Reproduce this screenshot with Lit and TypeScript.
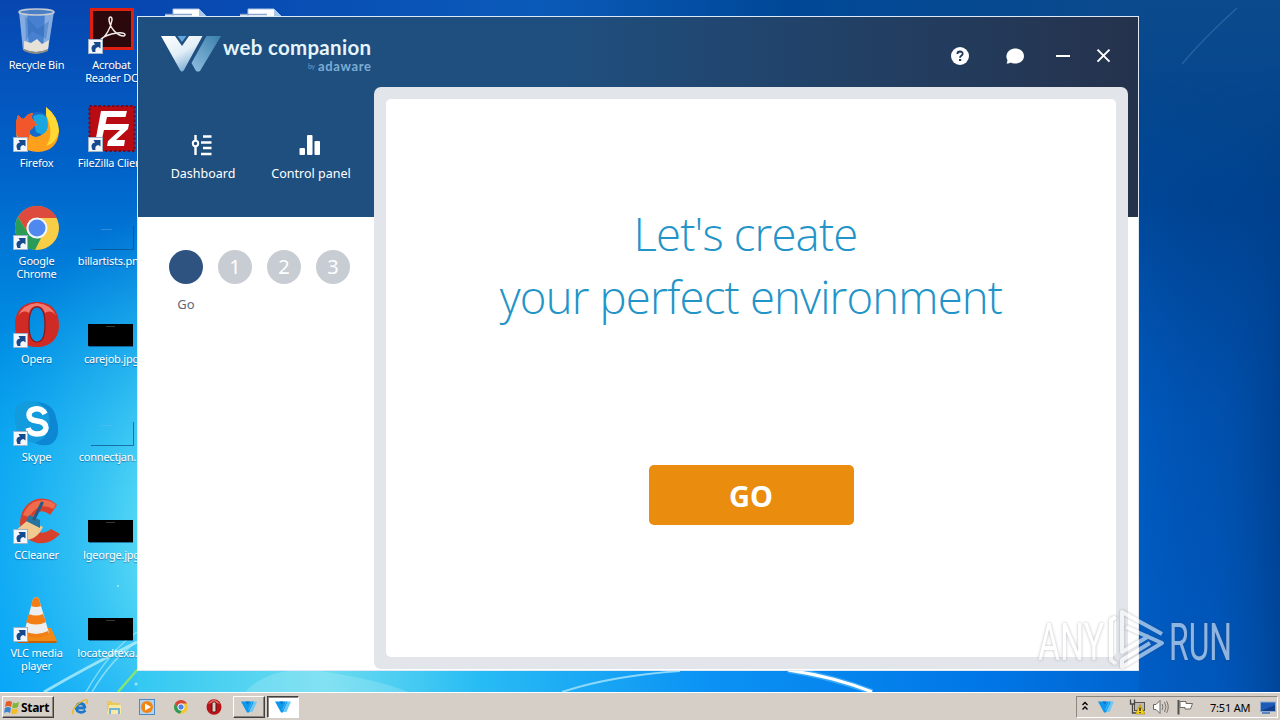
import { LitElement, html, css, svg, nothing, TemplateResult } from 'lit';
import { customElement, property } from 'lit/decorators.js';
import { classMap } from 'lit/directives/class-map.js';

interface Shortcut {
  icon: string;
  label: string;
  link?: boolean;
}

const COLUMNS: Shortcut[][] = [
  [
    { icon: 'bin', label: 'Recycle Bin' },
    { icon: 'firefox', label: 'Firefox', link: true },
    { icon: 'chrome', label: 'Google Chrome', link: true },
    { icon: 'opera', label: 'Opera', link: true },
    { icon: 'skype', label: 'Skype', link: true },
    { icon: 'ccleaner', label: 'CCleaner', link: true },
    { icon: 'vlc', label: 'VLC media player', link: true }
  ],
  [
    { icon: 'acrobat', label: 'Acrobat Reader DC', link: true },
    { icon: 'filezilla', label: 'FileZilla Client', link: true },
    { icon: 'clear', label: 'billartists.png' },
    { icon: 'black', label: 'carejob.jpg' },
    { icon: 'clear', label: 'connectjan....' },
    { icon: 'black', label: 'lgeorge.jpg' },
    { icon: 'black', label: 'locatedtexa....' }
  ],
  [{ icon: 'doc', label: '' }],
  [{ icon: 'doc', label: '' }]
];

// All artwork is drawn on a 48x48 grid
const ART: Record<string, TemplateResult> = {
  bin: svg`
    <path d="M7 4 L11 43 Q24 50 36 43 L42 4Z" fill="#5d93d8" opacity=".75"/>
    <path d="M7 4 L11 43 L17 45 L15 5Z M33 5 L31 45 L36 43 L42 4Z" fill="#b7cfee" opacity=".55"/>
    <path d="M13 9 L26 22 L37 14 L34 32 L20 24 L14 34Z" fill="#2e68b8" opacity=".4"/>
    <path d="M12 34 L19 36 L25 32 L30 37 L37 33 L36 42 Q24 48 12 42Z" fill="#e6e2d8"/>
    <path d="M12 42 Q24 48 36 42 L36 44 Q24 50 12 44Z" fill="#8e8b82"/>
    <ellipse cx="24.500" cy="5" rx="17.500" ry="3" fill="#4c7fc4" stroke="#c3cbd4" stroke-width="1.600"/>`,
  firefox: svg`
    <circle cx="25" cy="25" r="18" fill="#1668c9"/>
    <path d="M21 11 Q31 6 37 15 Q40 24 33 31 L24 27Z" fill="#19a5df"/>
    <path d="M4 17 L6 10 Q8 13 12 14 Q16 8 21 8 Q18 14 23 17 L25 20 Q21 21 20 24 Q16 25 18 29 Q23 35 31 29 Q39 25 34 10 L34 2 Q46 11 47 26 Q46 46 26 47 Q5 46 4 27Z" fill="#ffa01c"/>
    <path d="M4 17 L6 10 Q8 13 12 14 Q16 8 21 8 Q18 14 23 17 L25 20 Q21 21 20 24 Q16 25 18 29 L15 40 Q5 34 4 27Z" fill="#f2572b"/>
    <path d="M34 2 Q46 11 47 26 Q44 39 34 41 Q43 29 34 10Z" fill="#ffd934"/>`,
  chrome: svg`
    <circle cx="25" cy="25" r="22" fill="#f9ce47"/>
    <path d="M6 14 A22 22 0 0 1 45 15 H25 A10 10 0 0 0 16 30Z" fill="#dc4b3e"/>
    <path d="M6 14 L16 30 Q20 36 29 35 L23 47 A22 22 0 0 1 6 14Z" fill="#2b9c57"/>
    <circle cx="25" cy="25" r="10.500" fill="#f2f6fa"/>
    <circle cx="25" cy="25" r="8.500" fill="#4f88ee"/>`,
  opera: svg`
    <path fill-rule="evenodd" d="M25 1 C39 1 47 10 47 24 C47 38 38 46 25 46 C11 46 3 38 3 24 C3 10 11 1 25 1Z M25 6 C19 6 17 14 17 24 C17 34 19 41 25 41 C31 41 33 34 33 24 C33 14 31 6 25 6Z" fill="#cf2a24"/>
    <path d="M6 15 Q11 3 25 2 Q39 3 44 15 Q39 8 33 12 Q31 5 25 5 Q19 5 17 12 Q11 8 6 15Z" fill="#f07a70"/>
    <path fill="none" d="M25 6 C19 6 17 14 17 24 C17 34 19 41 25 41 C31 41 33 34 33 24 C33 14 31 6 25 6Z" stroke="#8c1519" stroke-width="1.200"/>`,
  skype: svg`
    <path d="M4 9 Q9 0 20 2 Q42 3 44 19 Q50 38 39 45 Q31 48 22 44 Q6 42 4 27 Q1 16 4 9Z" fill="#129bdd"/>
    <path d="M25 3 Q42 5 44 19 Q50 38 39 45 Q31 48 23 44 Q44 36 35 10Z" fill="#0a74cc" opacity=".55"/>
    <path d="M33 15 Q30 9 23 10 Q17 11 17 16 Q17 21 25 22 Q34 23 34 29 Q33 35 25 35 Q18 35 16 29" fill="none" stroke="#fff" stroke-width="5.500"/>`,
  ccleaner: svg`
    <path d="M45 8 L38 18 Q30 11 23 17 Q16 24 23 33 Q30 39 39 32 L48 37 Q38 48 25 46 Q9 42 8 26 Q9 7 25 2 Q37 0 45 8Z" fill="#d9402c"/>
    <path d="M11 18 Q17 3 31 3 Q39 3 44 8 L41 12 Q27 4 17 20Z" fill="#ee6b4b"/>
    <path d="M2 35 L16 23 L31 30 Q25 43 12 43 L8 37Z" fill="#f1ca91"/>
    <path d="M14 24 L17 18 L28 23 L28 31Z" fill="#28749e"/>
    <path d="M22 22 L30 6" stroke="#235a86" stroke-width="3" stroke-linecap="round"/>`,
  vlc: svg`
    <path d="M10 33 L39 33 L45 46 H5Z" fill="#f28a17"/>
    <path d="M5 46 L6 48 H44 L45 46Z" fill="#c76105"/>
    <path d="M21 4 Q25 0 27 4 L37 38 Q24 46 12 38Z" fill="#eee"/>
    <path d="M21 4 Q25 0 27 4 L29 11 Q24 13 19 11Z M17 19 Q24 22 31 19 L34 27 Q24 32 14 27Z M12 36 Q24 42 36 36 L37 39 Q24 46 11 39Z" fill="#f37e13"/>`,
  acrobat: svg`
    <rect x="3" y="1" width="44" height="42" fill="#de1f12"/>
    <rect x="6" y="4" width="38" height="36" fill="#2b080b"/>
    <path d="M13 33 C19 30 24 20 25 13 C25 9 22 9 22 13 C23 21 30 29 37 29 C40 27 36 25 30 26 C22 27 16 30 13 33Z" fill="none" stroke="#f1eaea" stroke-width="1.500"/>`,
  filezilla: svg`
    <rect x="2.500" y="1" width="45" height="45" fill="#b90b12" stroke="#720b20" stroke-width="2" stroke-dasharray="2.500 2"/>
    <path d="M14 6 H40 L38.500 12 H20 L18.500 19 H30 L29 25 H17 L14 38 H8Z" fill="#fff"/>
    <path d="M27 19 H42 L41 24 L29 35 H38 L37 41 H20 L21 36 L33 25 H26Z" fill="#fff"/>`,
  clear: svg`
    <path d="M4 46.500 H46.500 V23" fill="none" stroke="#064f86" opacity=".7"/>
    <path d="M14 26.500 H25" stroke="#7fb9ec" stroke-width=".8" opacity=".45"/>`,
  black: svg`
    <rect x="1" y="23" width="45" height="22" fill="#000"/>
    <path d="M2 45.500 H46" stroke="#0a3c66" opacity=".6"/>
    <path d="M19 25.500 H28" stroke="#444" stroke-width=".8"/>`,
  doc: svg`
    <path d="M3 8 H36 L46 16 V48 H3Z" fill="#f6f9fd"/>
    <path d="M11 2 H37 L46 11 V40 H11Z" fill="#fff" stroke="#a9c1e4"/>
    <path d="M37 2 L46 11 H37Z" fill="#a8c8ea"/>
    <path d="M3 7.500 H30" stroke="#8ba5cf" stroke-width="1.500"/>`
};

@customElement('desktop-shortcut')
export class DesktopShortcut extends LitElement {
  @property() icon = '';
  @property() label = '';
  @property({ type: Boolean }) link = false;

  static styles = css`
    :host {
      display: flex;
      flex-direction: column;
      align-items: center;
      box-sizing: border-box;
      width: 75px;
      height: 98px;
      padding-top: 7px;
    }

    svg {
      flex: none;
      width: 48px;
      height: 48px;
      overflow: visible;
    }

    .label {
      width: max-content;
      max-width: 70px;
      margin-top: 3px;
      padding-left: 2px;
      color: #fff;
      font: 11px/13px 'Noto Sans', 'Liberation Sans', sans-serif;
      letter-spacing: -0.22px;
      text-align: center;
      text-shadow: 0 1px 1px rgba(0, 20, 70, 0.4);
    }
  `;

  render() {
    return html`
      <svg viewBox="0 0 48 48">
        ${ART[this.icon]}
        ${this.link
          ? svg`
            <rect x="1.500" y="32.500" width="14" height="14" fill="#f3f6fa" stroke="#9fb3c8"/>
            <path d="M5.500 45 Q2.500 38.500 8 37.500 L6.500 35 H13.500 V41.500 L11.500 40 Q7.500 40.500 8.500 45Z" fill="#174a8c"/>`
          : nothing}
      </svg>
      <div class="label">${this.label}</div>
    `;
  }
}

@customElement('companion-window')
export class CompanionWindow extends LitElement {
  static styles = css`
    :host {
      display: block;
      box-sizing: border-box;
      border: 1px solid #dfe9f5;
      background: linear-gradient(90deg, #1f4f7f 0%, #1f4f7f 42%, #25324c 100%) 0 0 / 100% 200px no-repeat #fff;
      font-family: 'Noto Sans', 'Open Sans', sans-serif;
    }

    .titlebar {
      display: flex;
      height: 70px;
    }

    .logo {
      width: 240px;
      height: 70px;
    }

    .controls {
      display: flex;
      align-items: center;
      gap: 32px;
      height: 78px;
      margin-left: auto;
      padding-right: 26px;
    }

    .controls svg {
      display: block;
    }

    .help {
      margin-right: 5px;
    }

    .minimize {
      margin-right: -6px;
    }

    .body {
      display: flex;
    }

    .sidebar {
      width: 236px;
    }

    .tabs {
      display: flex;
      box-sizing: border-box;
      height: 130px;
      padding: 47px 0 0 11px;
    }

    .tab {
      display: flex;
      flex-direction: column;
      align-items: center;
      width: 108px;
      color: #fff;
      font-size: 12.5px;
      line-height: 18px;
      white-space: nowrap;
    }

    .tab svg {
      width: 24px;
      height: 22px;
      margin-bottom: 9px;
    }

    .steps {
      display: flex;
      gap: 15px;
      padding: 33px 0 0 31px;
    }

    .step {
      display: flex;
      flex-direction: column;
      align-items: center;
      gap: 11px;
      width: 34px;
      color: #5b6a7c;
      font-size: 13px;
      line-height: 18px;
    }

    .dot {
      width: 34px;
      border-radius: 50%;
      background: #c8ccd3;
      color: #fff;
      font-size: 20px;
      line-height: 34px;
      text-align: center;
    }

    .dot.active {
      height: 34px;
      background: #2e5380;
    }

    .panel {
      box-sizing: border-box;
      width: 754px;
      height: 582px;
      padding: 12px;
      border-radius: 7px;
      background: #e2e5ea;
    }

    .page {
      display: flex;
      flex-direction: column;
      align-items: center;
      box-sizing: border-box;
      height: 100%;
      padding-top: 103px;
      border-radius: 5px;
      background: #fff;
    }

    .headline {
      margin: 0;
      color: #2294c8;
      font: 300 45.500px/63px 'Open Sans', 'Noto Sans', sans-serif;
      letter-spacing: -0.84px;
      text-align: center;
      white-space: pre;
    }

    .go {
      width: 205px;
      height: 60px;
      margin-top: 137px;
      padding: 2px 0 0;
      border: 0;
      border-radius: 5px;
      background: #ea8d0e;
      color: #fff;
      font: 700 29px/58px 'Noto Sans', sans-serif;
    }
  `;

  private renderLogo() {
    return html`
      <svg class="logo" viewBox="138 17 240 70">
        <defs>
          <linearGradient id="front" x1="0" y1="0" x2=".6" y2="1">
            <stop offset="0" stop-color="#fff" />
            <stop offset=".55" stop-color="#e3eef7" />
            <stop offset="1" stop-color="#78acd6" />
          </linearGradient>
          <linearGradient id="back" x1="1" y1="0" x2=".2" y2="1">
            <stop offset="0" stop-color="#3a7fac" />
            <stop offset="1" stop-color="#89b9dc" />
          </linearGradient>
        </defs>
        <path d="M206.500 36 H221 L200 71 Q198 72 196 71 L191.500 63Z" fill="url(#back)" />
        <path d="M161 36 H175 L182 46 L189 36 H202.500 L184 70 Q182 73 180 70Z" fill="url(#front)" />
        <path d="M177.500 36 H186.500 L182 42Z" fill="#62a6dd" />
        <text x="223" y="55" textLength="148" font-family="Lato" font-weight="700" font-size="20.500" fill="#e6f5fc">web companion</text>
        <text x="308" y="69" textLength="7" font-family="Lato" font-size="7" fill="#6b9bc6">by</text>
        <text x="318" y="70.500" textLength="53" font-family="Lato" font-weight="700" font-size="13" fill="#7cadd3">adaware</text>
      </svg>
    `;
  }

  private renderControls() {
    return html`
      <div class="controls">
        <svg class="help" width="18" height="18">
          <circle cx="9" cy="9" r="9" fill="#fff" />
          <path d="M6.400 7 Q6.500 4.500 9 4.500 Q11.700 4.600 11.600 6.900 Q11.500 8.200 10 9 Q9.100 9.600 9.100 10.800" fill="none" stroke="#22395b" stroke-width="1.900" />
          <rect x="8" y="12" width="2.200" height="2" fill="#22395b" />
        </svg>
        <svg width="18" height="18">
          <path d="M9.500 1.500 C14 1.500 18 4.500 18 9 C18 13.500 14 16.500 9.500 16.500 Q6.500 16.800 4.500 15.600 Q3 16.900 .5 16.400 Q1.800 14.500 1.200 12.500 Q0 10.500 .6 8 C1.500 4 5 1.500 9.500 1.500Z" fill="#fff" />
        </svg>
        <svg class="minimize" width="14" height="18"><rect y="8" width="14" height="2" fill="#fff" /></svg>
        <svg width="16" height="18">
          <path d="M2 3 L14 15 M14 3 L2 15" transform="translate(-.5 -.4)" stroke="#fff" stroke-width="2" />
        </svg>
      </div>
    `;
  }

  render() {
    return html`
      <div class="titlebar">${this.renderLogo()} ${this.renderControls()}</div>
      <div class="body">
        <div class="sidebar">
          <div class="tabs">
            <div class="tab">
              <svg viewBox="0 0 24 22">
                <path d="M4.500 1 V7 M4.500 13 V21" stroke="#fff" stroke-width="2.400" />
                <circle cx="4.500" cy="9.500" r="2.700" fill="none" stroke="#fff" stroke-width="2" />
                <path d="M12 2.500 H20.500 M10 8.500 H20.500 M12 14 H20.500 M10 20 H20.500" stroke="#fff" stroke-width="2.500" />
              </svg>
              Dashboard
            </div>
            <div class="tab">
              <svg viewBox="0 0 24 22">
                <rect x=".5" y="14" width="5.500" height="7" rx="1" fill="#fff" />
                <rect x="8" y="1" width="5.500" height="20" rx="1" fill="#fff" />
                <rect x="15.500" y="7" width="5.500" height="14" rx="1" fill="#fff" />
              </svg>
              Control panel
            </div>
          </div>
          <div class="steps">
            ${['', '1', '2', '3'].map(
              (n) => html`
                <div class="step">
                  <div class=${classMap({ dot: true, active: !n })}>${n}</div>
                  ${n ? nothing : html`<span>Go</span>`}
                </div>
              `
            )}
          </div>
        </div>
        <div class="panel">
          <div class="page">
            <h1 class="headline">${"Let's create \nyour perfect environment"}</h1>
            <button class="go">GO</button>
          </div>
        </div>
      </div>
    `;
  }
}

// 16x16 mark shared by the task buttons and the tray
const companionMark = svg`
  <path d="M13 2.500 H16 L11.500 13 L8.500 13Z" fill="#6cc8f6"/>
  <path d="M0 2.500 H13 L8 13.500 H6Z" fill="#0d98ee"/>
  <path d="M4.500 2.500 H8.500 L6.500 5.500Z" fill="#0a72c8"/>
  <path d="M11.500 2.500 L7.500 11" stroke="#4fbdf6"/>`;

const QUICK: TemplateResult[] = [
  svg`
    <path d="M13.500 9 H4.500 Q5 4.500 9 4.500 Q12.500 5 13 9 M13.500 11.500 Q9 15 5.500 12 Q4 10 4.500 7.500" fill="none" stroke="#1d78cb" stroke-width="2.800"/>
    <path d="M1 15 Q-1 12 5 6 Q13 -1 15.500 1.500 Q16 3 14 5" fill="none" stroke="#e9b82b" stroke-width="1.400"/>`,
  svg`
    <path d="M1 2 H6 L7 4 H14 V14 H1Z" fill="#e9c85c"/>
    <path d="M3 6 H15 V15 H1Z" fill="#f7e9a0"/>
    <path d="M4 15 V10 H13 V15" fill="none" stroke="#72b4df" stroke-width="2"/>`,
  svg`
    <rect x=".5" y=".5" width="15" height="15" fill="#b4d4ee" stroke="#4b8ac4"/>
    <circle cx="8" cy="8" r="6" fill="#f18513"/>
    <path d="M6 4.500 L12 8 L6 11.500Z" fill="#fff"/>`,
  svg`
    <circle cx="8" cy="8" r="6.800" fill="#f5c632"/>
    <path d="M2 4.500 A6.800 6.800 0 0 1 14 4.500 H8 L5 10Z" fill="#d8433a"/>
    <path d="M2 4.500 L5.500 10 L9 11 L7 14.800 A6.800 6.800 0 0 1 2 4.500Z" fill="#2f9c55"/>
    <circle cx="8" cy="8" r="3.200" fill="#4d83e6" stroke="#fff"/>`,
  svg`
    <ellipse cx="8" cy="8" rx="7.500" ry="7.800" fill="#b7141a"/>
    <path d="M2 5 Q8 -3 14 5 Q8 2 2 5Z" fill="#e46b62"/>
    <rect x="6" y="3" width="4" height="10" rx="1.500" fill="#d6cfc7" stroke="#5f0c0f"/>`
];

@customElement('task-bar')
export class TaskBar extends LitElement {
  static styles = css`
    :host {
      display: flex;
      align-items: center;
      box-sizing: border-box;
      height: 28px;
      padding: 1px 2px 0;
      border-top: 1px solid #fff;
      background: #d6cfc7;
      color: #000;
      font: 11px/13px 'Noto Sans', 'Liberation Sans', sans-serif;
    }

    svg {
      display: block;
      flex: none;
      width: 16px;
      height: 16px;
    }

    .button {
      display: flex;
      align-items: center;
      justify-content: center;
      box-sizing: border-box;
      width: 32px;
      height: 22px;
      border: 1px solid;
      border-color: #fff #404040 #404040 #fff;
      box-shadow: inset -1px -1px #8b8680;
    }

    .button.pressed {
      margin-left: 2px;
      border-color: #404040 #fff #fff #404040;
      background: #fff;
      box-shadow: inset 1px 1px #8b8680;
    }

    .start {
      justify-content: flex-start;
      gap: 1px;
      width: 52px;
      padding-left: 1px;
      font-size: 12px;
      font-weight: 700;
      letter-spacing: -0.3px;
    }

    .quick {
      display: flex;
      gap: 17.500px;
      padding: 0 11px 0 18px;
    }

    .tray {
      display: flex;
      align-items: center;
      box-sizing: border-box;
      width: 202px;
      height: 22px;
      margin-left: auto;
      padding-left: 4px;
      border: 1px solid;
      border-color: #8b8680 #fff #fff #8b8680;
    }

    .companion {
      margin: 0 15px 0 1px;
    }

    .volume {
      margin: 0 8px;
    }

    .clock {
      width: 43px;
      margin: 0 7px 0 17px;
      letter-spacing: -0.2px;
      white-space: nowrap;
    }
  `;

  render() {
    return html`
      <div class="button start">
        <svg viewBox="0 0 16 16">
          <path d="M2 3 Q5 1 8 3 L7 8 Q4 6 1 8Z" fill="#e65b2a" />
          <path d="M9 3.500 Q12 5 15 3 L14 8 Q11 10 8 8.500Z" fill="#7fb93c" />
          <path d="M1 9 Q4 7 7 9 L6 14 Q3 12 0 14Z" fill="#3c83d0" />
          <path d="M8 9.500 Q11 11 14 9 L13 14 Q10 16 7 14.500Z" fill="#f4bd2c" />
        </svg>
        Start
      </div>
      <div class="quick">${QUICK.map((art) => html`<svg viewBox="0 0 16 16">${art}</svg>`)}</div>
      <div class="button"><svg viewBox="0 0 16 16">${companionMark}</svg></div>
      <div class="button pressed"><svg viewBox="0 0 16 16">${companionMark}</svg></div>
      <div class="tray">
        <svg viewBox="0 0 16 16">
          <path d="M1.500 6 L4 3.500 L6.500 6 M1.500 10.500 L4 8 L6.500 10.500" fill="none" stroke="#000" stroke-width="1.400" />
        </svg>
        <svg class="companion" viewBox="0 0 16 16">${companionMark}</svg>
        <svg viewBox="0 0 16 16">
          <rect x="5.500" y="3.500" width="10" height="8" fill="#bdbab4" stroke="#55524c" />
          <path d="M1.500 .5 V5 H5.500 V.5 M3.500 5 V14 H8" fill="none" stroke="#444" stroke-width="1.300" />
          <path d="M11 5.500 L16 15 H6.500Z" fill="#f5d51d" stroke="#a08200" stroke-width=".6" />
          <path d="M11 8.500 V12 M11 13 V14" stroke="#000" stroke-width="1.200" />
        </svg>
        <svg class="volume" viewBox="0 0 16 16">
          <path d="M.5 5.500 H3 L7 1.500 V14.500 L3 10.500 H.5Z" fill="#fff" stroke="#6a6762" />
          <path d="M9 5 Q11 8 9 11 M11.500 3 Q14.500 8 11.500 13 M13.500 2 Q17 8 13.500 14" fill="none" stroke="#77746f" />
        </svg>
        <svg viewBox="0 0 16 16">
          <path d="M1.500 1 V15.500" stroke="#55524d" stroke-width="2" />
          <path d="M3 2.500 H9 V4.500 H15.500 L13.500 10 H8 V8.500 H3Z" fill="#fff" stroke="#6d6a65" />
        </svg>
        <span class="clock">7:51 AM</span>
        <svg viewBox="0 0 16 16">
          <rect x=".5" y="3" width="15" height="9.500" fill="#1c5cb8" stroke="#8fa9cb" />
          <path d="M1 12 L15 6 V12Z" fill="#123f8c" />
          <path d="M2 14 H10" stroke="#5b87bd" stroke-width="2" />
        </svg>
      </div>
    `;
  }
}

@customElement('app-root')
export class AppRoot extends LitElement {
  static styles = css`
    :host {
      display: flex;
      flex-direction: column;
      position: relative;
      width: 1280px;
      height: 720px;
      overflow: hidden;
    }

    .desktop {
      position: relative;
      flex: 1;
      overflow: hidden;
    }

    .wallpaper {
      position: absolute;
      inset: 0;
      width: 1280px;
      height: 692px;
    }

    .columns {
      display: flex;
      position: relative;
      margin-left: -2px;
    }

    companion-window {
      position: absolute;
      left: 137px;
      top: 16px;
      width: 1002px;
      height: 655px;
    }

    .watermark {
      position: absolute;
      left: 1020px;
      top: 590px;
      width: 240px;
      height: 100px;
      filter: drop-shadow(0 0 1.500px rgba(60, 60, 80, 0.6));
      opacity: 0.56;
    }
  `;

  private renderWallpaper() {
    return html`
      <svg class="wallpaper" viewBox="0 0 1280 692" preserveAspectRatio="none">
        <defs>
          <linearGradient id="left" x2="0" y2="1">
            <stop offset="0" stop-color="#0746b0" />
            <stop offset=".25" stop-color="#0064ca" />
            <stop offset=".45" stop-color="#0088e0" />
            <stop offset=".65" stop-color="#00a0f0" />
            <stop offset="1" stop-color="#00a2f8" />
          </linearGradient>
          <radialGradient id="glow" gradientUnits="userSpaceOnUse" cx="300" cy="545" r="370">
            <stop offset="0" stop-color="#8fe6f4" />
            <stop offset=".45" stop-color="#4fd4f4" />
            <stop offset="1" stop-color="#22b4f4" stop-opacity="0" />
          </radialGradient>
          <linearGradient id="right" x2="0" y2="1">
            <stop offset="0" stop-color="#0b4a8c" />
            <stop offset=".3" stop-color="#00428f" />
            <stop offset=".6" stop-color="#0051b0" />
            <stop offset="1" stop-color="#005ac2" />
          </linearGradient>
          <linearGradient id="shade">
            <stop offset="0" stop-color="#0066d0" stop-opacity=".4" />
            <stop offset=".5" stop-color="#0050a8" stop-opacity=".2" />
            <stop offset="1" stop-color="#00387f" stop-opacity=".6" />
          </linearGradient>
          <linearGradient id="fade" x2="0" y2="1">
            <stop offset=".1" stop-color="#000" />
            <stop offset=".6" stop-color="#fff" />
          </linearGradient>
          <mask id="lower"><rect x="1139" width="141" height="692" fill="url(#fade)" /></mask>
          <linearGradient id="top">
            <stop offset="0" stop-color="#0746b0" />
            <stop offset=".4" stop-color="#0a5ab9" />
            <stop offset=".65" stop-color="#004897" />
            <stop offset="1" stop-color="#0b4a8c" />
          </linearGradient>
          <linearGradient id="bottom">
            <stop offset="0" stop-color="#33c8f2" />
            <stop offset=".19" stop-color="#6cdcf0" />
            <stop offset=".34" stop-color="#28bcf4" />
            <stop offset=".57" stop-color="#0b92f4" />
            <stop offset=".85" stop-color="#0076e6" />
            <stop offset="1" stop-color="#0064ce" />
          </linearGradient>
        </defs>
        <rect width="640" height="692" fill="url(#left)" />
        <rect width="640" height="692" fill="url(#glow)" />
        <rect x="640" width="640" height="692" fill="url(#right)" />
        <rect x="1139" width="141" height="692" fill="url(#shade)" mask="url(#lower)" />
        <rect x="137" width="1002" height="16" fill="url(#top)" />
        <rect x="137" y="671" width="1002" height="21" fill="url(#bottom)" />
        <path d="M44 692 Q85 668 137 642" fill="none" stroke="#b9f1fb" stroke-width="3" opacity=".75" />
        <path d="M86 692 Q110 650 137 632 M92 692 Q112 658 137 642" fill="none" stroke="#a5ebfa" stroke-width="1.500" opacity=".7" />
        <path d="M118 692 Q130 678 139 668" fill="none" stroke="#84e572" stroke-width="2.500" />
        <path d="M245 692 Q270 665 320 671 Q380 680 408 692Z" fill="#c3f2f6" opacity=".25" />
        <path d="M562 692 Q610 676 680 671" fill="none" stroke="#8dd9fc" stroke-width="2" />
        <path d="M788 670 Q830 676 872 692" fill="none" stroke="#5cc0ff" stroke-width="6" opacity=".6" />
        <path d="M788 670 Q835 677 872 692" fill="none" stroke="#fff" stroke-width="3" />
        <path d="M1237 8 Q1202 40 1182 64" fill="none" stroke="#5a92c4" stroke-width="1.500" opacity=".35" />
        <circle cx="118" cy="586" r=".8" fill="#fff" />
        <circle cx="136" cy="684" r="1.500" fill="#c8f6fc" opacity=".7" />
      </svg>
    `;
  }

  render() {
    return html`
      <div class="desktop">
        ${this.renderWallpaper()}
        <div class="columns">
          ${COLUMNS.map(
            (column) => html`
              <div>
                ${column.map(
                  (s) => html`<desktop-shortcut .icon=${s.icon} .label=${s.label} .link=${!!s.link}></desktop-shortcut>`
                )}
              </div>
            `
          )}
        </div>
        <companion-window></companion-window>
      </div>
      <task-bar></task-bar>
      <svg class="watermark" viewBox="1020 590 240 100">
        <g font-family="Roboto" font-size="52" fill="#fff">
          <text x="1038" y="660" textLength="66" lengthAdjust="spacingAndGlyphs">ANY</text>
          <text x="1169" y="660" textLength="63" lengthAdjust="spacingAndGlyphs">RUN</text>
        </g>
        <g fill="none" stroke="#fff" stroke-width="4" stroke-linejoin="round">
          <path d="M1116 617 L1111 620 V660 L1116 664" />
          <path d="M1162 634 L1122 612 V652 L1149 636" />
          <path d="M1126 627 L1162 643 L1122 667 V660 L1150 643" />
        </g>
      </svg>
    `;
  }
}
